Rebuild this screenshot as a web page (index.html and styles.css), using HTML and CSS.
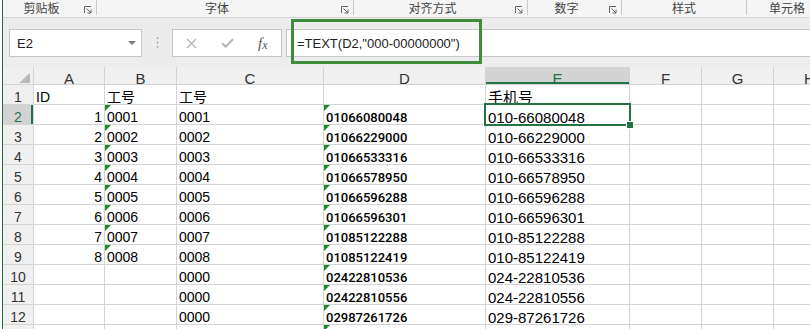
FILE: index.html
```html
<!DOCTYPE html>
<html lang="zh-CN">

<head>
    <meta charset="UTF-8">
    <meta name="viewport" content="width=device-width, initial-scale=1.0">
    <title>TEXT 函数 - 手机号格式</title>
    <link rel="stylesheet" href="styles.css">
</head>

<body>
    <div class="app">
        <!-- Ribbon group labels -->
        <div class="ribbon">
            <div class="group g-clip"><span class="label">剪贴板</span><span class="launcher"><svg width="8" height="8" viewBox="0 0 8 8"><path d="M0.5 7V0.5H7M2.5 2.5L7 7M7 3.5V7H3.5" fill="none" stroke="#666" stroke-width="1"/></svg></span></div>
            <div class="group g-font"><span class="label">字体</span><span class="launcher"><svg width="8" height="8" viewBox="0 0 8 8"><path d="M0.5 7V0.5H7M2.5 2.5L7 7M7 3.5V7H3.5" fill="none" stroke="#666" stroke-width="1"/></svg></span></div>
            <div class="group g-align"><span class="label">对齐方式</span><span class="launcher"><svg width="8" height="8" viewBox="0 0 8 8"><path d="M0.5 7V0.5H7M2.5 2.5L7 7M7 3.5V7H3.5" fill="none" stroke="#666" stroke-width="1"/></svg></span></div>
            <div class="group g-num"><span class="label">数字</span><span class="launcher"><svg width="8" height="8" viewBox="0 0 8 8"><path d="M0.5 7V0.5H7M2.5 2.5L7 7M7 3.5V7H3.5" fill="none" stroke="#666" stroke-width="1"/></svg></span></div>
            <div class="group g-style"><span class="label">样式</span></div>
            <div class="group g-cell"><span class="label">单元格</span></div>
        </div>

        <!-- Name box and formula bar -->
        <div class="formula-bar">
            <div class="name-box">
                <span>E2</span>
                <svg width="8" height="4" viewBox="0 0 8 4"><polygon points="0,0 8,0 4,4" fill="#7a7a7a"/></svg>
            </div>
            <div class="grip">
                <svg width="3" height="11" viewBox="0 0 3 11"><circle cx="1.5" cy="1.2" r="0.9" fill="#a3a3a3"/><circle cx="1.5" cy="5.5" r="0.9" fill="#a3a3a3"/><circle cx="1.5" cy="9.8" r="0.9" fill="#a3a3a3"/></svg>
            </div>
            <div class="fx-box">
                <svg width="11" height="11" viewBox="0 0 11 11"><path d="M1 1L10 10M10 1L1 10" stroke="#b3b3b3" stroke-width="1.3"/></svg>
                <svg width="13" height="10" viewBox="0 0 13 10"><path d="M1 5.2L4.6 8.6L12 1.2" fill="none" stroke="#b3b3b3" stroke-width="2"/></svg>
                <span class="fx">f<span>x</span></span>
            </div>
            <div class="formula-input">=TEXT(D2,"000-00000000")</div>
        </div>

        <!-- Worksheet grid -->
        <div class="sheet">
            <div class="hdr corner"><svg width="11" height="10" viewBox="0 0 11 10"><polygon points="11,0 11,10 0,10" fill="#b9b9b9"/></svg></div>
            <div class="hdr col">A</div><div class="hdr col">B</div><div class="hdr col">C</div><div class="hdr col">D</div><div class="hdr col sel-col">E</div><div class="hdr col">F</div><div class="hdr col">G</div><div class="hdr col">H</div>

            <div class="hdr row">1</div><div class="cell">ID</div><div class="cell">工号</div><div class="cell">工号</div><div class="cell"></div><div class="cell tel">手机号</div><div class="cell"></div><div class="cell"></div><div class="cell"></div>
            <div class="hdr row sel-row">2</div><div class="cell num">1</div><div class="cell flag">0001</div><div class="cell">0001</div><div class="cell flag code">01066080048</div><div class="cell tel active">010-66080048</div><div class="cell"></div><div class="cell"></div><div class="cell"></div>
            <div class="hdr row">3</div><div class="cell num">2</div><div class="cell flag">0002</div><div class="cell">0002</div><div class="cell flag code">01066229000</div><div class="cell tel">010-66229000</div><div class="cell"></div><div class="cell"></div><div class="cell"></div>
            <div class="hdr row">4</div><div class="cell num">3</div><div class="cell flag">0003</div><div class="cell">0003</div><div class="cell flag code">01066533316</div><div class="cell tel">010-66533316</div><div class="cell"></div><div class="cell"></div><div class="cell"></div>
            <div class="hdr row">5</div><div class="cell num">4</div><div class="cell flag">0004</div><div class="cell">0004</div><div class="cell flag code">01066578950</div><div class="cell tel">010-66578950</div><div class="cell"></div><div class="cell"></div><div class="cell"></div>
            <div class="hdr row">6</div><div class="cell num">5</div><div class="cell flag">0005</div><div class="cell">0005</div><div class="cell flag code">01066596288</div><div class="cell tel">010-66596288</div><div class="cell"></div><div class="cell"></div><div class="cell"></div>
            <div class="hdr row">7</div><div class="cell num">6</div><div class="cell flag">0006</div><div class="cell">0006</div><div class="cell flag code">01066596301</div><div class="cell tel">010-66596301</div><div class="cell"></div><div class="cell"></div><div class="cell"></div>
            <div class="hdr row">8</div><div class="cell num">7</div><div class="cell flag">0007</div><div class="cell">0007</div><div class="cell flag code">01085122288</div><div class="cell tel">010-85122288</div><div class="cell"></div><div class="cell"></div><div class="cell"></div>
            <div class="hdr row">9</div><div class="cell num">8</div><div class="cell flag">0008</div><div class="cell">0008</div><div class="cell flag code">01085122419</div><div class="cell tel">010-85122419</div><div class="cell"></div><div class="cell"></div><div class="cell"></div>
            <div class="hdr row">10</div><div class="cell"></div><div class="cell"></div><div class="cell">0000</div><div class="cell flag code">02422810536</div><div class="cell tel">024-22810536</div><div class="cell"></div><div class="cell"></div><div class="cell"></div>
            <div class="hdr row">11</div><div class="cell"></div><div class="cell"></div><div class="cell">0000</div><div class="cell flag code">02422810556</div><div class="cell tel">024-22810556</div><div class="cell"></div><div class="cell"></div><div class="cell"></div>
            <div class="hdr row">12</div><div class="cell"></div><div class="cell"></div><div class="cell">0000</div><div class="cell flag code">02987261726</div><div class="cell tel">029-87261726</div><div class="cell"></div><div class="cell"></div><div class="cell"></div>
            <div class="hdr row"></div><div class="cell"></div><div class="cell"></div><div class="cell"></div><div class="cell flag code"></div><div class="cell tel"></div><div class="cell"></div><div class="cell"></div><div class="cell"></div>
        </div>
    </div>

    <!-- Green box drawn round the formula -->
    <div class="formula-mark"></div>
</body>

</html>
```

FILE: styles.css
```css
/* Page */

body {
    margin: 0;
    height: 329px;
    overflow: hidden;
    background: #fff;
    font-family: 'Liberation Sans', 'Noto Sans CJK SC', sans-serif;
}

.app {
    margin-left: 2px;
    height: 329px;
    overflow: hidden;
    border-left: 1px solid #217346;
}
/* Ribbon group labels */

.ribbon {
    display: flex;
    height: 17px;
    background: #f5f5f5;
    border-bottom: 1px solid #d6d6d6;
    font-size: 12px;
    color: #444;
    font-family: 'Noto Sans CJK SC', sans-serif;
}

.group {
    flex: none;
    display: flex;
    align-items: center;
    height: 15px;
    box-sizing: border-box;
    border-right: 1px solid #c8c8c8;
}

.group .label {
    flex: 1;
    text-align: center;
    line-height: 15px;
}

.launcher {
    width: 16px;
    display: flex;
    justify-content: center;
    padding-top: 4px;
}

.g-clip {
    width: 94px;
}

.g-font {
    width: 257px;
}

.g-align {
    width: 174px;
}

.g-num {
    width: 94px;
}

.g-style {
    width: 125px;
}

.g-cell {
    width: 80px;
    border-right: none;
}
/* Name box and formula bar */

.formula-bar {
    display: flex;
    align-items: center;
    padding: 11px 0 10px 6px;
    background: #ececec;
}

.name-box,
.fx-box,
.formula-input {
    height: 28px;
    box-sizing: border-box;
    background: #fff;
    border: 1px solid #c6c6c6;
    display: flex;
    align-items: center;
}

.name-box {
    width: 133px;
    justify-content: space-between;
    padding: 0 5px 0 7px;
    font-size: 13px;
    color: #222;
}

.grip {
    width: 30px;
    display: flex;
    justify-content: center;
    padding-bottom: 1px;
}

.fx-box {
    width: 110px;
    gap: 24px;
    padding-left: 13px;
}

.fx {
    font-family: 'Liberation Serif', serif;
    font-style: italic;
    font-size: 15px;
    color: #555;
    line-height: 1;
}

.fx span {
    font-size: 12px;
    position: relative;
    top: 1px;
}

.formula-input {
    flex: 1;
    margin-left: 4px;
    margin-right: -4px;
    padding-left: 10px;
    font-size: 13px;
    color: #222;
}

.formula-mark {
    position: absolute;
    left: 291px;
    top: 19px;
    width: 191px;
    height: 45px;
    box-sizing: border-box;
    border: 3px solid #3d8d3d;
}
/* Worksheet grid */

.sheet {
    display: grid;
    grid-template-columns: 30px 70px 71px 146px 161px 143px 71px 71px 71px;
    grid-template-rows: 17px repeat(13, 19px);
    gap: 1px;
    background: #d4d4d4;
    width: max-content;
}

.hdr {
    background: #f0f0f0;
    color: #333;
    font-size: 14px;
    text-align: center;
}

.hdr.col {
    font-size: 15px;
    line-height: 17px;
    padding-top: 3px;
    box-sizing: border-box;
}

.hdr.row {
    line-height: 19px;
    padding-top: 3px;
    box-sizing: border-box;
}

.corner {
    display: flex;
    justify-content: flex-end;
    align-items: flex-end;
    padding: 0 3px 1px 0;
}

.sel-col {
    background: #d3d3d3;
    color: #217346;
    box-shadow: inset 0 -2px 0 #217346;
}

.sel-row {
    background: #d3d3d3;
    color: #217346;
    box-shadow: inset -2px 0 0 #217346;
}

.cell {
    position: relative;
    background: #fff;
    color: #000;
    font-size: 14px;
    line-height: 19px;
    padding: 3px 2px 0;
    box-sizing: border-box;
    white-space: nowrap;
}

.num {
    text-align: right;
}

.tel {
    font-size: 15px;
}

.code {
    font-family: 'Roboto', sans-serif;
    font-weight: 500;
    font-size: 13px;
}
/* Little green marks for numbers stored as text */

.flag::before {
    content: "";
    position: absolute;
    left: 0;
    top: 0;
    border-top: 6px solid #1f8a2a;
    border-right: 6px solid transparent;
}
/* Selected cell with its fill handle */

.active {
    z-index: 1;
    outline: 2px solid #217346;
}

.active::after {
    content: "";
    position: absolute;
    right: -5px;
    bottom: -5px;
    width: 6px;
    height: 6px;
    background: #217346;
    border: 1px solid #fff;
}
```
